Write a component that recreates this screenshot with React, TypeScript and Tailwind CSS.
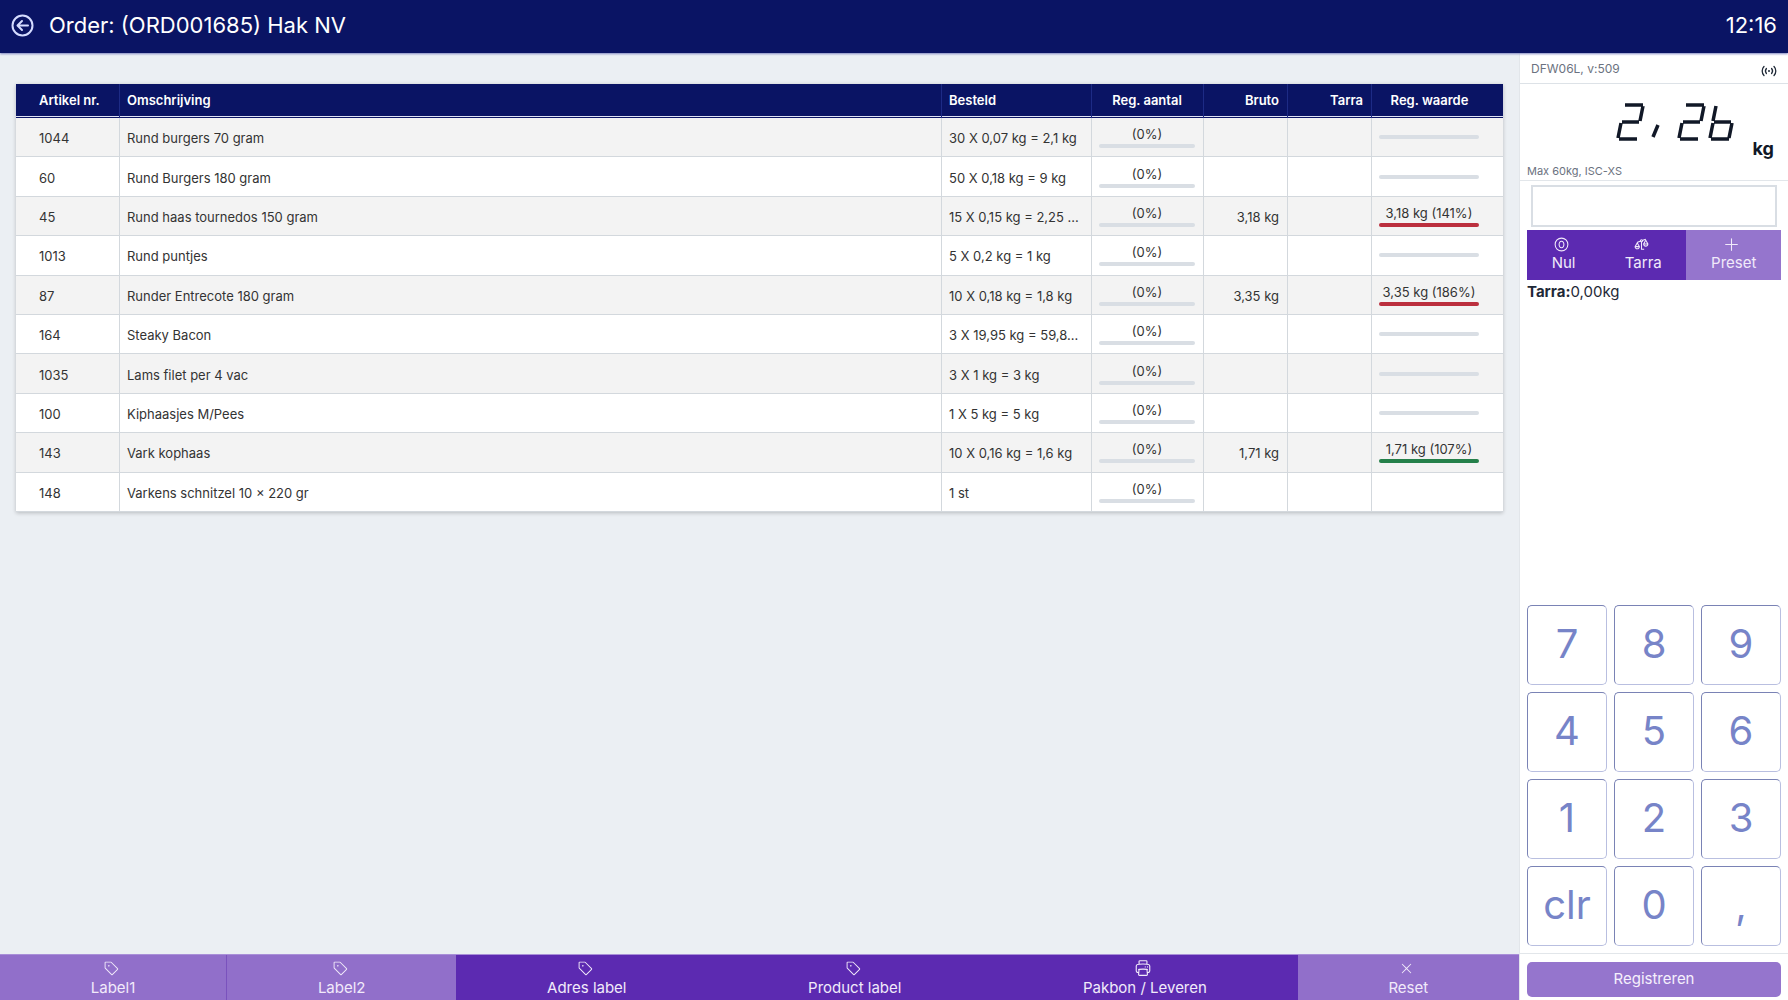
import type { ReactNode } from "react";
import { GoTag } from "react-icons/go";
import { HiOutlinePrinter } from "react-icons/hi2";
import { LiaBalanceScaleLeftSolid } from "react-icons/lia";
import { PiNumberCircleZero, PiPlus, PiX } from "react-icons/pi";

type Row = {
  nr: string;
  name: string;
  ordered: string;
  gross?: string;
  value?: string;
  tone?: "red" | "green" | "none";
};

const rows: Row[] = [
  { nr: "1044", name: "Rund burgers 70 gram", ordered: "30 X 0,07 kg = 2,1 kg" },
  { nr: "60", name: "Rund Burgers 180 gram", ordered: "50 X 0,18 kg = 9 kg" },
  { nr: "45", name: "Rund haas tournedos 150 gram", ordered: "15 X 0,15 kg = 2,25 ...", gross: "3,18 kg", value: "3,18 kg (141%)", tone: "red" },
  { nr: "1013", name: "Rund puntjes", ordered: "5 X 0,2 kg = 1 kg" },
  { nr: "87", name: "Runder Entrecote 180 gram", ordered: "10 X 0,18 kg = 1,8 kg", gross: "3,35 kg", value: "3,35 kg (186%)", tone: "red" },
  { nr: "164", name: "Steaky Bacon", ordered: "3 X 19,95 kg = 59,8..." },
  { nr: "1035", name: "Lams filet per 4 vac", ordered: "3 X 1 kg = 3 kg" },
  { nr: "100", name: "Kiphaasjes M/Pees", ordered: "1 X 5 kg = 5 kg" },
  { nr: "143", name: "Vark kophaas", ordered: "10 X 0,16 kg = 1,6 kg", gross: "1,71 kg", value: "1,71 kg (107%)", tone: "green" },
  { nr: "148", name: "Varkens schnitzel 10 × 220 gr", ordered: "1 st", tone: "none" },
];

const keys = ["7", "8", "9", "4", "5", "6", "1", "2", "3", "clr", "0", ","];

function OrderTable() {
  const head = "border-r border-[#1d2b85] pr-2 pl-[7px] pb-0.5 font-semibold";
  const cell = "border-r border-b border-[#d3d8dd] pr-2 pl-[7px]";
  const text = `${cell} pt-0.5`;
  return (
    <table className="h-[428px] w-full table-fixed border-separate border-spacing-0 text-[13px] leading-4 text-[#333] shadow-[0_1px_4px_rgba(0,0,0,0.22)]">
      <colgroup>
        <col className="w-[104px]" />
        <col />
        <col className="w-[150px]" />
        <col className="w-[112px]" />
        <col className="w-[84px]" />
        <col className="w-[84px]" />
        <col className="w-[131px]" />
      </colgroup>
      <thead>
        <tr className="h-[34px] bg-[#0a1464] text-left text-white shadow-[inset_0_-1px_0_#0a1464,inset_0_-2px_0_#dfe2f5,0_2px_2px_#d3d6ec]">
          <th className={`${head} pl-[23px]`}>Artikel nr.</th>
          <th className={head}>Omschrijving</th>
          <th className={head}>Besteld</th>
          <th className={`${head} text-center`}>Reg. aantal</th>
          <th className={`${head} text-right`}>Bruto</th>
          <th className={`${head} text-right`}>Tarra</th>
          <th className="pr-6 pb-0.5 pl-2 text-center font-semibold">Reg. waarde</th>
        </tr>
      </thead>
      <tbody>
        {rows.map((r) => (
          <tr key={r.nr} className="bg-white odd:bg-[#f3f3f3]">
            <td className={`${text} pl-[23px]`}>{r.nr}</td>
            <td className={text}>{r.name}</td>
            <td className={`${text} truncate`}>{r.ordered}</td>
            <td className={`${cell} text-center`}>
              (0%)
              <div className="mt-0.5 h-1 rounded-full bg-[#d9dee4]" />
            </td>
            <td className={`${text} text-right`}>{r.gross}</td>
            <td className={cell} />
            <td className="border-b border-[#d3d8dd] pr-6 pl-[7px] text-center whitespace-nowrap">
              {r.value}
              {r.tone === "red" && <div className="mt-0.5 h-1 rounded-full bg-[#bb2f3e]" />}
              {r.tone === "green" && <div className="mt-0.5 h-1 rounded-full bg-[#25804a]" />}
              {!r.tone && <div className="h-1 rounded-full bg-[#d9dee4]" />}
            </td>
          </tr>
        ))}
      </tbody>
    </table>
  );
}

function ActionButton({ icon, label, light, divider }: { icon: ReactNode; label: string; light?: boolean; divider?: boolean }) {
  return (
    <button
      type="button"
      className={`flex flex-auto flex-col items-center gap-0.5 pt-[5px] text-[15px] leading-5 text-[#f1eafa] ${light ? "bg-[#916fca]" : "bg-[#5c2ab1]"} ${divider ? "border-r border-[#7a52bd]" : ""}`}
    >
      <span className="flex h-4 items-center pr-[3px] text-[15px]">{icon}</span>
      {label}
    </button>
  );
}

function ScaleButton({ icon, label, light }: { icon: ReactNode; label: string; light?: boolean }) {
  return (
    <button
      type="button"
      className={`flex flex-auto flex-col items-center pt-[5px] pb-[7px] text-[15px] leading-5 text-[#f1eafa] ${light ? "bg-[#9575cd]" : "bg-[#5c2ab1]"}`}
    >
      <span className="flex h-[18px] items-center pr-1 text-[17px]">{icon}</span>
      {label}
    </button>
  );
}

const TWO = "M7 0H25 M25 1L22 16 M4 17H21 M3 18L0 33 M1 34H19";
const SIX = "M6 1L3 16 M4 17H21 M3 18L0 33 M1 34H19 M22 18L19 33";

function WeightDisplay() {
  return (
    <div className="flex h-[77px] items-end justify-end gap-4 pr-3.5 text-[#111827]">
      <svg role="img" aria-label="2,26" width="122" height="41" viewBox="-3 -3 122 41" className="mb-[18px]" fill="none" stroke="currentColor" strokeWidth="3.500">
        <path d={TWO} />
        <path d="M40 20L35 32" />
        <path d={TWO} transform="translate(61 0)" />
        <path d={SIX} transform="translate(92 0)" />
      </svg>
      <span className="text-[18px] leading-6 font-bold">kg</span>
    </div>
  );
}

export default function App() {
  return (
    <div className="flex h-screen flex-col overflow-hidden bg-[#ebeff3] font-['Inter',sans-serif]">
      <header className="z-10 flex h-[53px] shrink-0 items-center bg-[#0a1464] px-[11px] pb-0.5 text-[22px] text-white shadow-[0_1px_2px_#7f86c0]">
        <a href="#back" aria-label="Terug" className="mr-[15px] text-[#d5dcff]">
          <svg width="23" height="23" viewBox="0 0 23 23" fill="none" stroke="currentColor" strokeWidth="2">
            <circle cx="11.5" cy="11.5" r="10" />
            <path d="M17 11.5H7 M11 7L6.5 11.5L11 16" strokeLinecap="round" strokeLinejoin="round" />
          </svg>
        </a>
        <h1>Order: (ORD001685) Hak NV</h1>
        <time className="ml-auto">12:16</time>
      </header>

      <div className="flex min-h-0 flex-1">
        <div className="flex min-w-0 flex-1 flex-col">
          <main className="flex-1 px-4 pt-[31px]">
            <OrderTable />
          </main>
          <nav className="flex h-[46px] overflow-hidden border-t border-[#a98fd8]">
            <ActionButton light divider icon={<GoTag />} label="Label1" />
            <ActionButton light icon={<GoTag />} label="Label2" />
            <ActionButton icon={<GoTag />} label="Adres label" />
            <ActionButton icon={<GoTag />} label="Product label" />
            <ActionButton icon={<HiOutlinePrinter className="text-[18px]" />} label="Pakbon / Leveren" />
            <ActionButton light icon={<PiX />} label="Reset" />
          </nav>
        </div>

        <aside className="flex w-[269px] shrink-0 flex-col border-l border-[#e2e6ea] bg-white">
          <div className="flex h-[31px] items-center justify-between border-b border-[#dde2e7] px-[11px] pt-0.5 text-[12px] text-[#6b7280]">
            <span>DFW06L, v:509</span>
            <svg aria-hidden="true" width="16" height="12" viewBox="0 0 16 12" fill="none" stroke="#1f2937" strokeWidth="1.3" strokeLinecap="round" className="mt-1">
              <path d="M3 1.5C.6 4 .6 8 3 10.5M13 1.5C15.4 4 15.4 8 13 10.5M5.4 3.5C4.2 5 4.2 7 5.4 8.5M10.6 3.5C11.8 5 11.8 7 10.6 8.5" />
              <circle cx="8" cy="6" r="1" fill="#1f2937" stroke="none" />
            </svg>
          </div>
          <WeightDisplay />
          <div className="border-b border-[#e2e6ea] px-[7px] pt-px text-[11px] leading-[18px] text-[#6b7280]">Max 60kg, ISC-XS</div>
          <input aria-label="Invoer" className="mx-[11px] mt-1 h-[42px] border-2 border-[#d9dee4] px-2 text-[16px] outline-none" />
          <div className="mx-[7px] mt-[3px] flex">
            <ScaleButton icon={<PiNumberCircleZero />} label="Nul" />
            <ScaleButton icon={<LiaBalanceScaleLeftSolid />} label="Tarra" />
            <ScaleButton light icon={<PiPlus />} label="Preset" />
          </div>
          <p className="px-[7px] text-[15px] leading-6 text-[#1f2937]">
            <b>Tarra:</b>0,00kg
          </p>
          <div className="mt-auto grid grid-cols-3 gap-[7px] border-b border-[#e2e6ea] p-[7px]">
            {keys.map((k) => (
              <button
                key={k}
                type="button"
                className="flex h-20 items-center justify-center rounded-[5px] border border-t-[#7a83b5] border-r-[#b9bfe0] border-b-[#b9bfe0] border-l-[#7a83b5] pb-0.5 text-[40px] text-[#7784c8]"
              >
                {k}
              </button>
            ))}
          </div>
          <div className="px-[7px] pt-2 pb-[3px]">
            <button type="button" className="h-[35px] w-full rounded-[5px] bg-[#9575cd] text-[15px] text-[#f5f0fc]">
              Registreren
            </button>
          </div>
        </aside>
      </div>
    </div>
  );
}
